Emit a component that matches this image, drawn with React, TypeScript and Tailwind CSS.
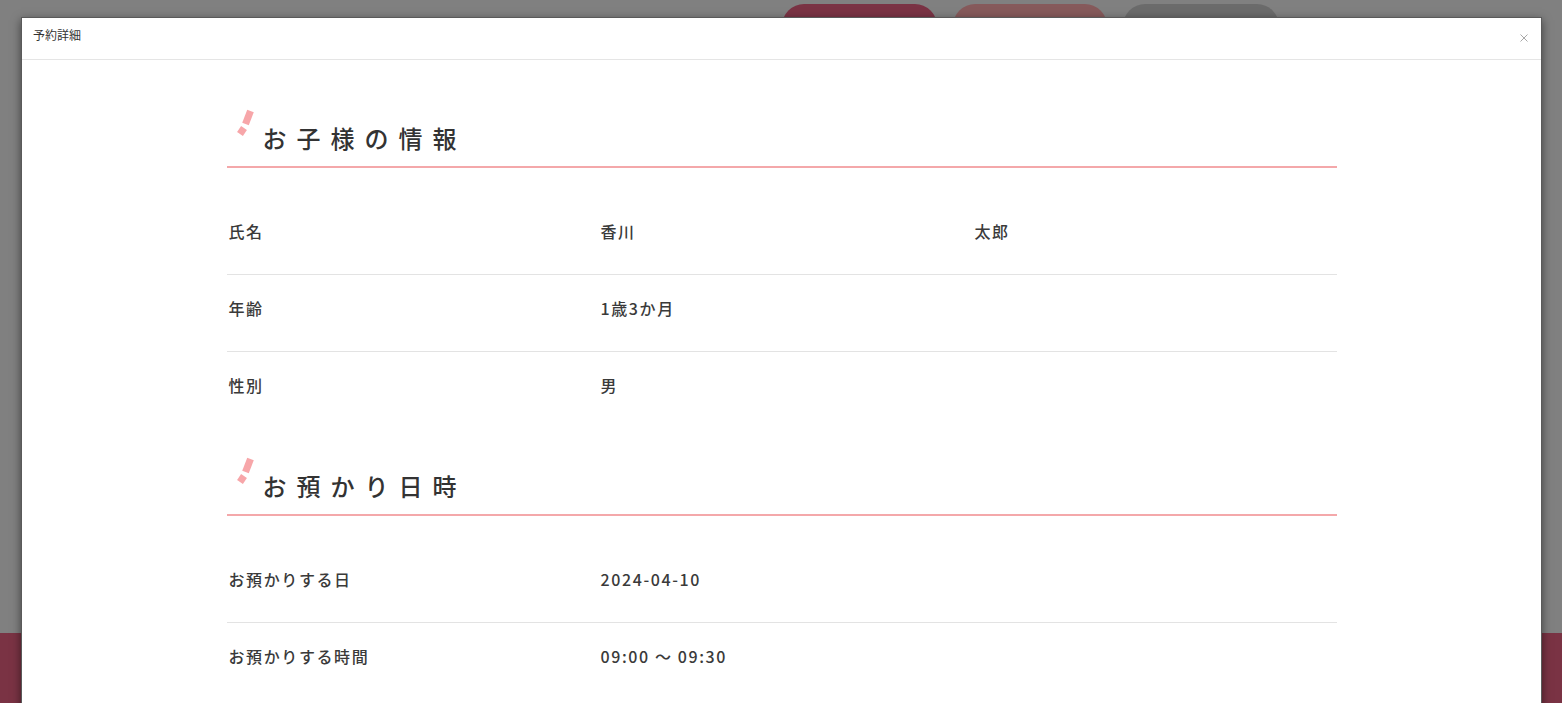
import React from "react";

const font = { fontFamily: '"Noto Sans CJK JP", "Noto Sans", sans-serif' };

function Deco() {
  return (
    <svg
      className="absolute left-[7px] top-[-11px]"
      width="24"
      height="28"
      viewBox="0 0 24 28"
    >
      <line x1="16.5" y1="2" x2="11.5" y2="15" stroke="#f7a6a9" strokeWidth="7" />
      <line x1="10" y1="19" x2="6" y2="25" stroke="#f7a6a9" strokeWidth="7" />
    </svg>
  );
}

function Heading({ children, className = "" }: { children: React.ReactNode; className?: string }) {
  return (
    <div className={"relative border-b-2 border-[#f4a8aa] pb-[10px] pl-[36px] " + className}>
      <Deco />
      <h2 className="text-[24px] leading-[36px] font-medium tracking-[10px] text-[#333]">{children}</h2>
    </div>
  );
}

function Row({ label, v1, v2 }: { label: string; v1: string; v2?: string }) {
  return (
    <div className="grid grid-cols-[372px_374px_1fr] border-b border-[#e3e3e3] pl-[2px] pt-[21px] pb-[31px] last:border-b-0 text-[16px] leading-[24px] font-medium tracking-[0.1em] text-[#3a3a3a]">
      <div>{label}</div>
      <div className="whitespace-pre">{v1}</div>
      <div>{v2 ?? ""}</div>
    </div>
  );
}

export default function App() {
  return (
    <div className="relative h-[703px] w-[1562px] overflow-hidden bg-[#808080]" style={font}>
      {/* background page (dimmed) */}
      <div className="flex h-full flex-col">
        <div className="flex gap-[16px] pl-[782px] pt-[4px]">
          <div className="h-[44px] w-[155px] rounded-full bg-[#7a3344]" />
          <div className="h-[44px] w-[154px] rounded-full bg-[#865a5b]" />
          <div className="h-[44px] w-[156px] rounded-full bg-[#6b6b6b]" />
        </div>
        <div className="flex-1" />
        <div className="h-[70px] bg-[#7a3344]" />
      </div>

      {/* modal */}
      <div className="absolute left-[21px] top-[17px] w-[1521px] h-[720px] border border-[#5a5a5a] bg-white shadow-[0_3px_9px_rgba(0,0,0,0.5)]">
        <div className="flex h-[42px] items-start justify-between border-b border-[#e5e5e5] pl-[11px] pr-[13px] pt-[8px]">
          <span className="text-[12px] leading-[18px] text-[#333]">予約詳細</span>
          <svg className="mt-[8px]" width="8" height="8" viewBox="0 0 8 8">
            <path d="M0.5 0.5 L7.5 7.5 M7.5 0.5 L0.5 7.5" stroke="#a8a8a8" strokeWidth="1" />
          </svg>
        </div>
        <div className="mx-auto w-[1110px] pt-[60px]">
          <Heading>お子様の情報</Heading>
          <div className="mt-[30px]">
            <Row label="氏名" v1="香川" v2="太郎" />
            <Row label="年齢" v1="1歳3か月" />
            <Row label="性別" v1="男" />
          </div>
          <Heading className="mt-[40px]">お預かり日時</Heading>
          <div className="mt-[30px]">
            <Row label="お預かりする日" v1="2024-04-10" />
            <Row label="お預かりする時間" v1="09:00 ～ 09:30" />
          </div>
        </div>
      </div>
    </div>
  );
}
